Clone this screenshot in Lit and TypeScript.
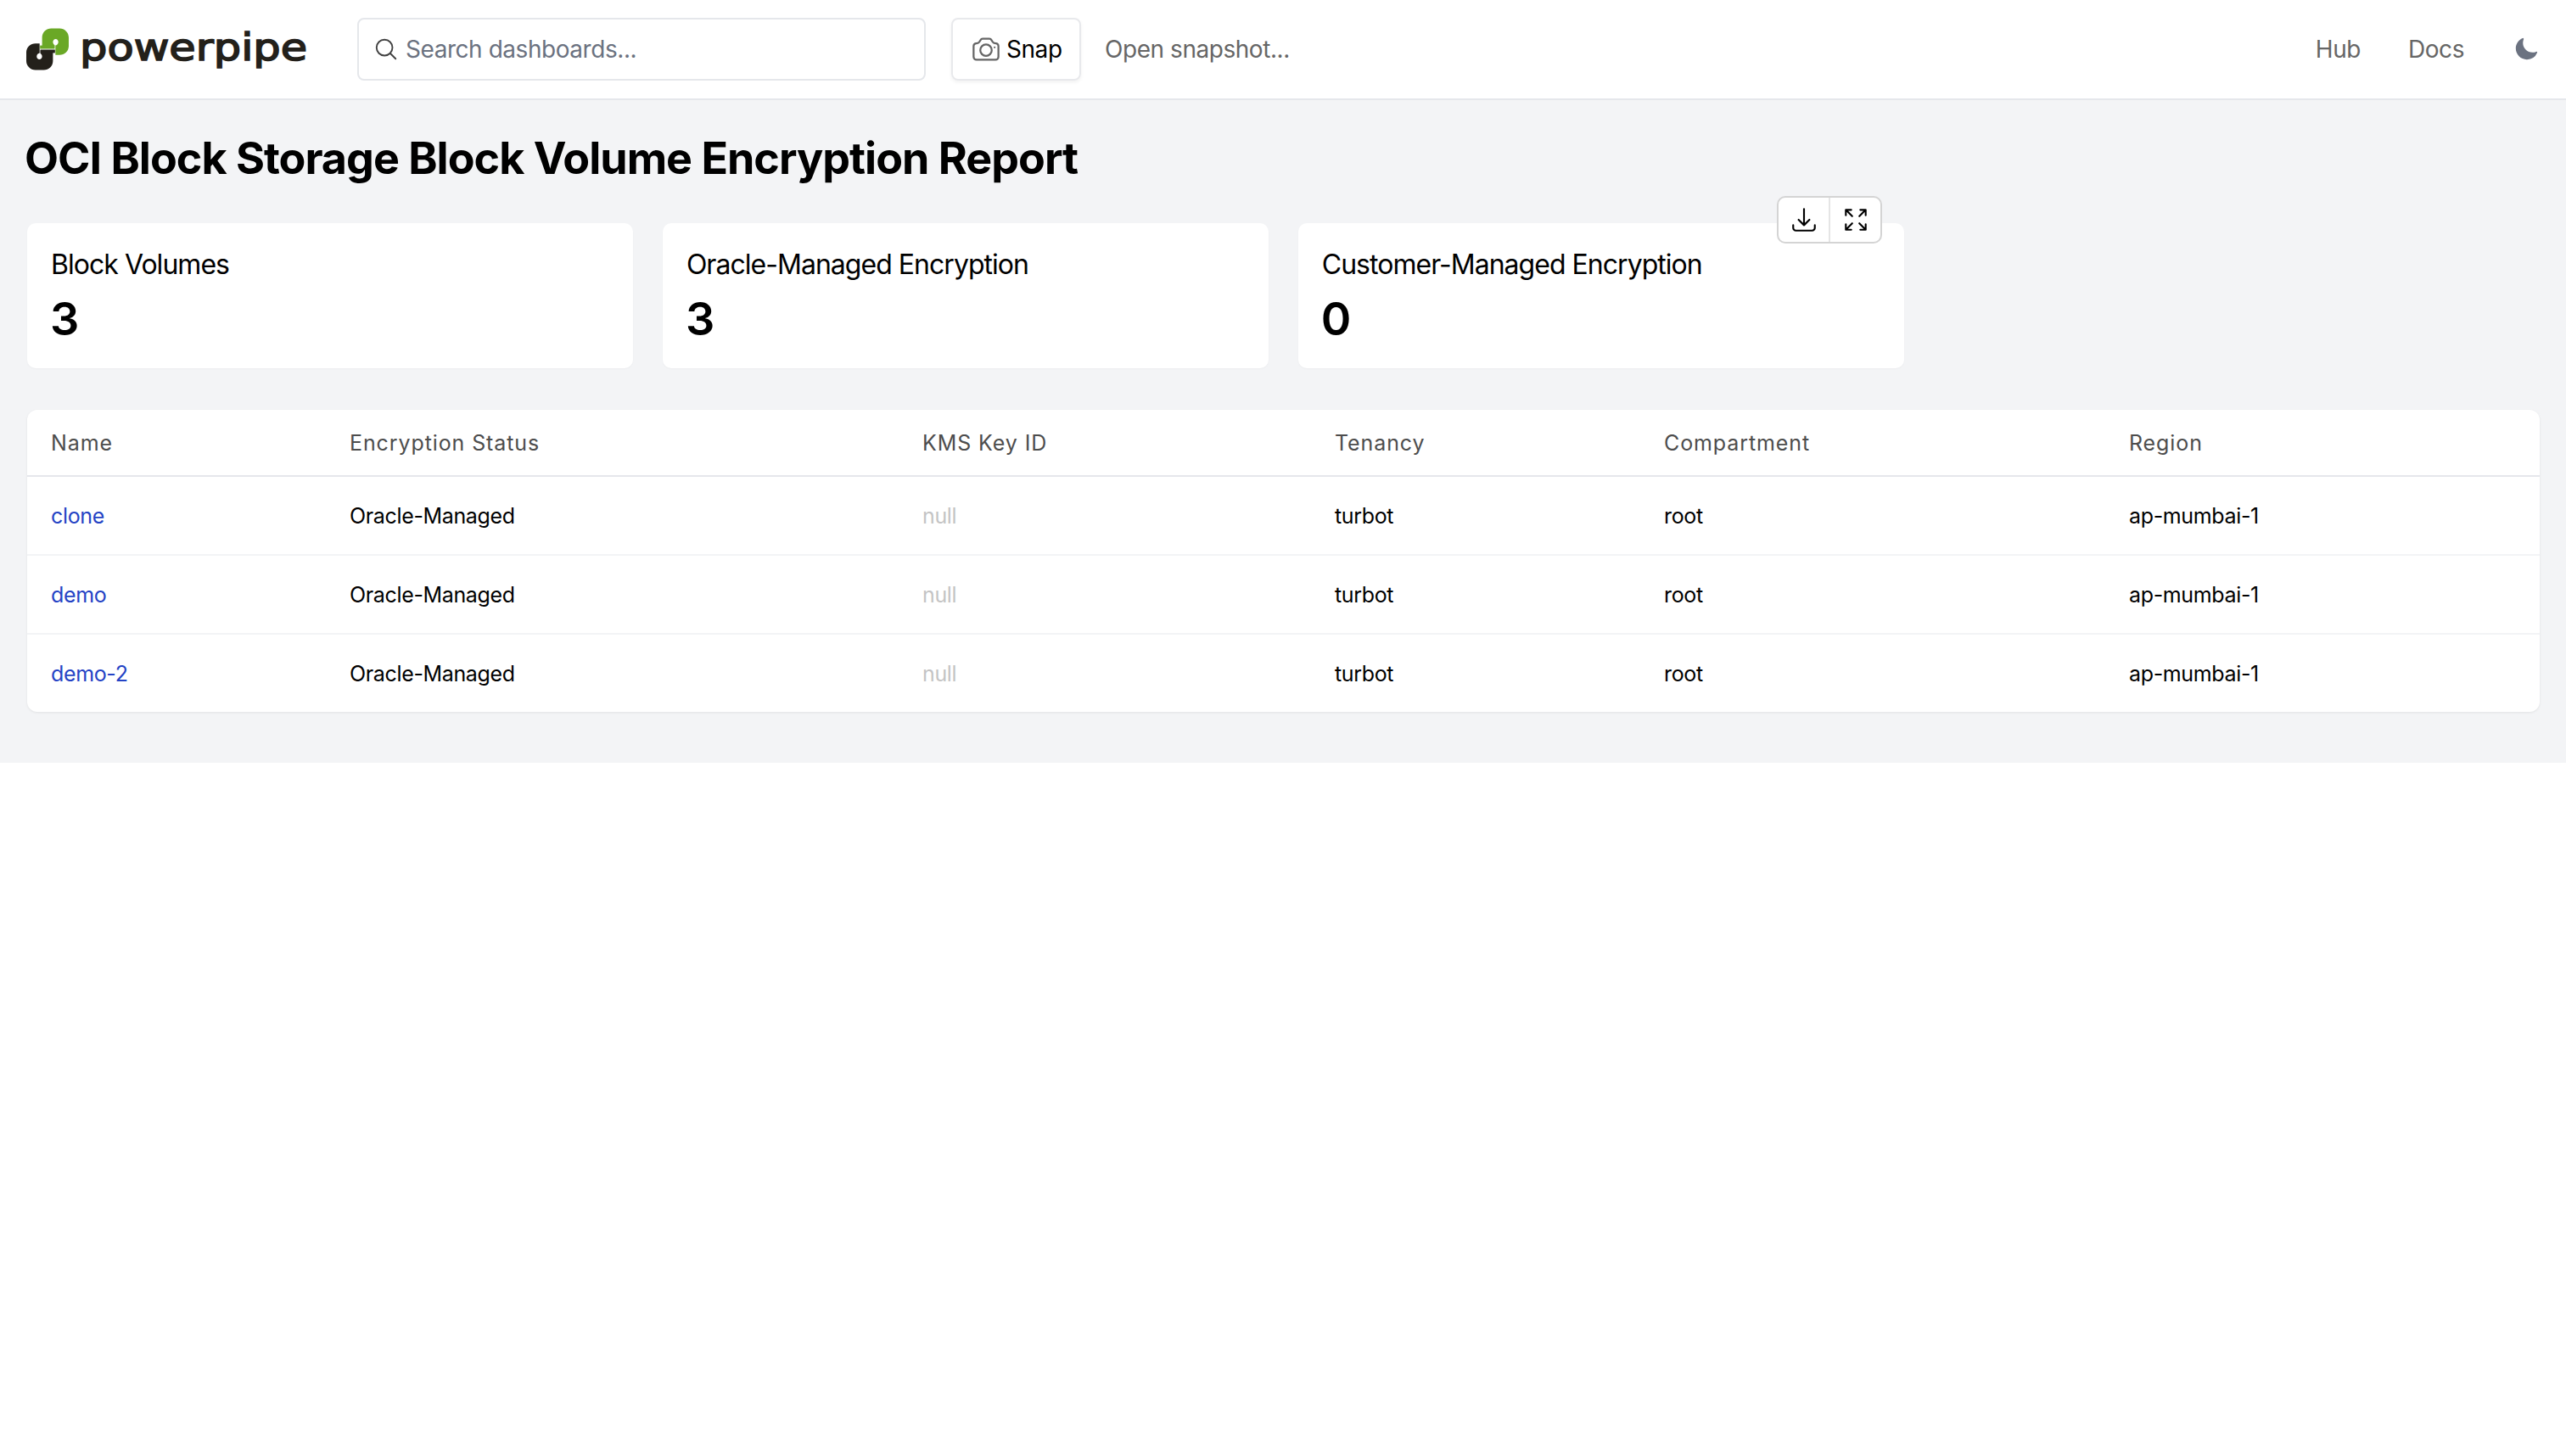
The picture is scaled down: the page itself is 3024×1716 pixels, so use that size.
import { LitElement, html, css, svg } from "lit";
import { customElement } from "lit/decorators.js";

const rows = [
  { name: "clone" },
  { name: "demo" },
  { name: "demo-2" },
];
const cards = ["Block Volumes:3", "Oracle-Managed Encryption:3", "Customer-Managed Encryption:0"].map((s) => s.split(":"));

const pipe = svg`<path d="M49 57V44C49 37.5 54 33 60 33H70C76 33 81 38 81 44V54C81 60.500 76 65 70 65H65V53.500C66.800 53.300 68.500 51.500 68.500 49.300C68.500 47.300 67 45.700 65.300 45.700C63.500 45.700 62 47.300 62 49.300C62 50.800 62.800 52.200 64 52.900V53H64V57H49Z"/><path d="M46.500 53.500H64V57.500H46.500Z"/>`;

@customElement("app-root")
export class AppRoot extends LitElement {
  static styles = css`
    :host { display: block; font-family: Inter, "Liberation Sans", sans-serif; color: #000; background: #fff; }
    * { box-sizing: border-box; }
    svg { display: block; flex: none; }
    .o { fill: none; stroke: currentColor; stroke-width: 1.5; stroke-linecap: round; stroke-linejoin: round; }
    header { height: 118px; border-bottom: 2px solid #e5e7eb; display: flex; align-items: center; padding: 0 32px 0 30px; font-size: 28px; letter-spacing: -0.45px; }
    .logo { display: flex; align-items: center; width: 391px; flex: none; letter-spacing: 0; }
    .mark { width: 52px; height: 52px; margin-right: 12px; margin-top: -1px; }
    .word { font-family: "DejaVu Sans", sans-serif; font-weight: 400; font-size: 44px; line-height: 52px; color: #23201a; -webkit-text-stroke: 1.6px #23201a; letter-spacing: 0; transform: scaleX(1.16); transform-origin: left center; margin-top: -4px; }
    .search { width: 670px; height: 74px; flex: none; border: 2px solid #e5e7eb; border-radius: 8px; display: flex; align-items: center; padding-left: 17px; color: #6b7280; }
    .search svg { width: 30px; height: 30px; margin-right: 8px; color: #404040; }
    .snap { width: 153px; height: 74px; flex: none; margin-left: 30px; border: 2px solid #e8e9ec; border-radius: 8px; display: flex; align-items: center; padding-left: 21px; box-shadow: 0 2px 4px rgba(0,0,0,.06); }
    .snap svg { width: 36px; height: 36px; color: #666; margin-right: 6px; }
    .open { margin-left: 28px; color: #666; }
    .spacer { flex: 1; }
    .nav { color: #666; }
    .nav + .nav { margin-left: 56px; }
    .moon { width: 30px; height: 30px; color: #6b7280; margin-left: 58px; fill: currentColor; }
    main { background: #f3f4f6; padding: 33px 31px 60px 32px; }
    h1 { margin: 0 0 0 -3px; font-size: 52px; line-height: 72px; font-weight: 700; letter-spacing: -1px; }
    .cards { display: grid; grid-template-columns: repeat(4, 1fr); gap: 34.5px; margin-top: 40px; }
    .card { position: relative; height: 171px; background: #fff; border-radius: 10px; padding: 26px 28px; box-shadow: 0 1px 2px rgba(0,0,0,.03); }
    .label { font-size: 32px; line-height: 46px; letter-spacing: -0.97px; }
    .value { font-size: 54px; line-height: 60px; font-weight: 600; margin-top: 11px; margin-left: -1px; }
    .tools { position: absolute; top: -32px; right: 26px; width: 124px; height: 56px; display: flex; background: #fff; border: 2px solid #d4d4d4; border-radius: 10px; }
    .tools div { flex: 1; display: flex; align-items: center; justify-content: center; }
    .tools div + div { border-left: 2px solid #e5e5e5; }
    .tools svg { width: 34px; height: 34px; }
    .table { margin-top: 49px; height: 356px; background: #fff; border-radius: 12px; box-shadow: 0 1px 3px rgba(0,0,0,.08); font-size: 25px; letter-spacing: -0.35px; }
    .tr { display: grid; grid-template-columns: 352px 675px 486px 388px 548px 1fr; align-items: center; height: 93px; border-bottom: 2px solid #f3f4f6; }
    .tr > div { padding-left: 28px; }
    .tr.head { height: 79px; border-bottom-color: #e5e7eb; color: #4d4d4d; letter-spacing: 0.9px; }
    .tr:last-child { border-bottom: 0; height: 91px; }
    .link { color: #2443c5; }
    .null { color: #c4c4c4; }
  `;

  render() {
    return html`
      <header>
        <div class="logo">
          <svg class="mark" viewBox="29 32 53 52">
            <g fill="#6aa826">${pipe}</g>
            <g fill="#23201a" transform="rotate(180 55.500 58)">${pipe}</g>
          </svg>
          <span class="word">powerpipe</span>
        </div>
        <div class="search">
          <svg class="o" viewBox="0 0 24 24"><path d="m21 21-5.197-5.197m0 0A7.500 7.500 0 1 0 5.196 5.196a7.500 7.500 0 0 0 10.607 10.607Z"/></svg>
          Search dashboards...
        </div>
        <div class="snap">
          <svg class="o" viewBox="0 0 24 24"><path d="M6.827 6.175A2.310 2.310 0 0 1 5.186 7.230c-.38.054-.757.112-1.134.175C2.999 7.580 2.250 8.507 2.250 9.574V18a2.250 2.250 0 0 0 2.250 2.250h15A2.250 2.250 0 0 0 21.750 18V9.574c0-1.067-.75-1.994-1.802-2.169a47.865 47.865 0 0 0-1.134-.175 2.310 2.310 0 0 1-1.640-1.055l-.822-1.316a2.192 2.192 0 0 0-1.736-1.039 48.774 48.774 0 0 0-5.232 0 2.192 2.192 0 0 0-1.736 1.039l-.821 1.316Z"/><path d="M16.500 12.750a4.500 4.500 0 1 1-9 0 4.500 4.500 0 0 1 9 0ZM18.750 10.500h.008v.008h-.008V10.500Z"/></svg>
          Snap
        </div>
        <span class="open">Open snapshot...</span>
        <span class="spacer"></span>
        <span class="nav">Hub</span>
        <span class="nav">Docs</span>
        <svg class="moon" viewBox="0 0 24 24"><path fill-rule="evenodd" clip-rule="evenodd" d="M9.528 1.718a.75.75 0 0 1 .162.819A8.970 8.970 0 0 0 9 6a9 9 0 0 0 9 9 8.970 8.970 0 0 0 3.463-.69.75.75 0 0 1 .981.98 10.503 10.503 0 0 1-9.694 6.460c-5.799 0-10.500-4.701-10.500-10.500 0-4.368 2.667-8.112 6.460-9.694a.75.75 0 0 1 .818.162Z"/></svg>
      </header>
      <main>
        <h1>OCI Block Storage Block Volume Encryption Report</h1>
        <div class="cards">
          ${cards.map(([l, v], i) => html`
            <div class="card">
              <div class="label">${l}</div>
              <div class="value">${v}</div>
              ${i === 2 ? html`<div class="tools">
                <div><svg class="o" viewBox="0 0 24 24"><path d="M3 16.500v2.250A2.250 2.250 0 0 0 5.250 21h13.500A2.250 2.250 0 0 0 21 18.750V16.500M16.500 12 12 16.500m0 0L7.500 12m4.500 4.500V3"/></svg></div>
                <div><svg class="o" viewBox="0 0 24 24"><path d="M3.750 3.750v4.500m0-4.500h4.500m-4.500 0L9 9M3.750 20.250v-4.500m0 4.500h4.500m-4.500 0L9 15M20.250 3.750h-4.500m4.500 0v4.500m0-4.500L15 9m5.250 11.250h-4.500m4.500 0v-4.500m0 4.500L15 15"/></svg></div>
              </div>` : ""}
            </div>`)}
        </div>
        <div class="table">
          <div class="tr head">
            <div>Name</div><div>Encryption Status</div><div>KMS Key ID</div><div>Tenancy</div><div>Compartment</div><div>Region</div>
          </div>
          ${rows.map((r) => html`
            <div class="tr">
              <div class="link">${r.name}</div><div>Oracle-Managed</div><div class="null">null</div><div>turbot</div><div>root</div><div>ap-mumbai-1</div>
            </div>`)}
        </div>
      </main>
    `;
  }
}
